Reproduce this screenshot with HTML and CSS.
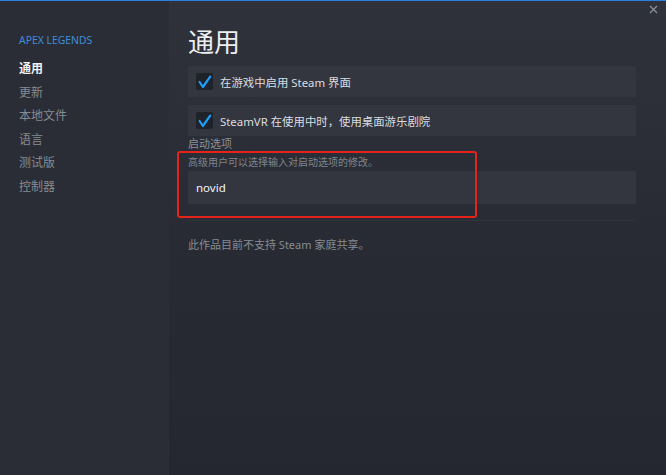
FILE: index.html
```html
<!DOCTYPE html>
<html lang="zh-CN">
<head>
<meta charset="utf-8">
<link rel="stylesheet" href="styles.css">
</head>
<body>
<div class="window">
  <div class="topbar"></div>
  <div class="layout">
    <nav class="sidebar">
      <div class="game">APEX LEGENDS</div>
      <ul class="nav">
        <li class="active">通用</li>
        <li>更新</li>
        <li>本地文件</li>
        <li>语言</li>
        <li>测试版</li>
        <li>控制器</li>
      </ul>
    </nav>
    <main class="main">
      <h1 class="title">通用</h1>
      <div class="row">
        <span class="box"><svg viewBox="0 0 17 17" width="17" height="17"><path d="M3.6 9 L6.9 14 L14.2 3.6" fill="none" stroke="#1a9fff" stroke-width="2.2" stroke-linecap="round" stroke-linejoin="round"/></svg></span>
        <span class="label">在游戏中启用 Steam 界面</span>
      </div>
      <div class="row">
        <span class="box"><svg viewBox="0 0 17 17" width="17" height="17"><path d="M3.6 9 L6.9 14 L14.2 3.6" fill="none" stroke="#1a9fff" stroke-width="2.2" stroke-linecap="round" stroke-linejoin="round"/></svg></span>
        <span class="label">SteamVR 在使用中时，使用桌面游乐剧院</span>
      </div>
      <div class="section">
        <div class="section-title">启动选项</div>
        <div class="section-desc">高级用户可以选择输入对启动选项的修改。</div>
        <div class="input">novid</div>
        <div class="highlight"></div>
      </div>
      <div class="sep"></div>
      <p class="note">此作品目前不支持 Steam 家庭共享。</p>
      <div class="close"><svg viewBox="0 0 9 9" width="9" height="9"><path d="M1 1 L8 8 M8 1 L1 8" stroke="#8b929a" stroke-width="1.2" fill="none"/></svg></div>
    </main>
  </div>
</div>
</body>
</html>
```
FILE: styles.css
```css
html, body {
  margin: 0;
  padding: 0;
  background: #262930;
}
body {
  font-family: "Noto Sans", "Noto Sans CJK SC", sans-serif;
  width: 666px;
  height: 475px;
  overflow: hidden;
}
.window {
  display: flex;
  flex-direction: column;
  width: 666px;
  height: 475px;
}
.topbar {
  height: 1px;
  background: #2a7fe0;
  flex: none;
}
.layout {
  flex: 1;
  display: flex;
}
.sidebar {
  width: 169px;
  flex: none;
  background: #2a2d35;
  padding: 31px 0 0 19px;
  box-sizing: border-box;
}
.game {
  font-size: 10.4px;
  line-height: 16px;
  color: #3d8fdb;
}
.nav {
  list-style: none;
  margin: 9px 0 0;
  padding: 0;
}
.nav li {
  font-size: 12px;
  line-height: 23.6px;
  color: #858b93;
}
.nav li.active {
  color: #f0f2f4;
  font-weight: 700;
}
.main {
  flex: 1;
  position: relative;
  background: linear-gradient(to bottom, #2f323b 0%, #282b33 50%, #24272f 100%);
  padding: 23px 30px 0 19px;
  box-sizing: border-box;
}
.title {
  margin: 0 0 6px;
  font-size: 26px;
  line-height: 36px;
  font-weight: 400;
  color: #eceef0;
}
.row {
  display: flex;
  align-items: center;
  height: 31px;
  background: #33363e;
  border-radius: 2px;
  padding-left: 8px;
  margin-bottom: 8px;
}
.row:nth-of-type(2) {
  margin-bottom: 0;
}
.box {
  width: 17px;
  height: 17px;
  background: #1f2228;
  border-radius: 2px;
  display: flex;
  margin-right: 7px;
}
.label {
  font-size: 11.4px;
  color: #dadde0;
}
.section {
  position: relative;
}
.section-title {
  font-size: 11px;
  line-height: 15px;
  color: #8a9098;
}
.section-desc {
  margin-top: 4px;
  font-size: 10px;
  line-height: 15px;
  color: #80868e;
}
.input {
  margin-top: 1px;
  height: 33px;
  background: #33363f;
  border-radius: 2px;
  padding-left: 8px;
  display: flex;
  align-items: center;
  font-size: 11.5px;
  font-weight: 400;
  color: #f2f4f6;
}
.highlight {
  position: absolute;
  left: -11px;
  top: 15px;
  width: 296px;
  height: 63px;
  border: 2px solid #e5231b;
  border-radius: 3px;
}
.sep {
  margin-top: 16px;
  height: 1px;
  background: #30333b;
}
.note {
  margin: 16px 0 0;
  font-size: 11px;
  line-height: 16px;
  color: #868c94;
}
.close {
  position: absolute;
  top: 4px;
  right: 8px;
  width: 9px;
  height: 9px;
  display: flex;
}
```
